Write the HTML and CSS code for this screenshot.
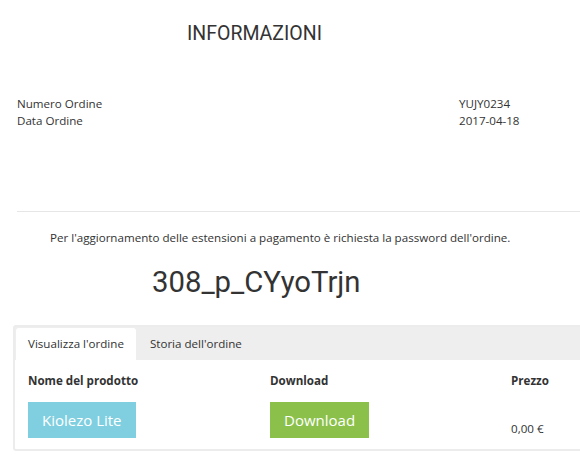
FILE: index.html
```html
<!DOCTYPE html>
<html lang="it">
    <head>
        <meta charset="utf-8">
        <title>Informazioni ordine</title>
        <link rel="stylesheet" href="styles.css">
    </head>
    <body>
        <div class="page">
            <h1 class="title">INFORMAZIONI</h1>
            <div class="info"> <!-- order data -->
                <span>Numero Ordine</span><span>YUJY0234</span>
                <span>Data Ordine</span><span>2017-04-18</span>
            </div>
            <hr class="sep">
            <p class="notice">Per l'aggiornamento delle estensioni a pagamento è richiesta la password dell'ordine.</p>
            <div class="password">308_p_CYyoTrjn</div>
            <div class="panel">
                <div class="tabs">
                    <div class="tab active">Visualizza l'ordine</div>
                    <div class="tab">Storia dell'ordine</div>
                </div>
                <div class="table">
                    <div class="th">Nome del prodotto</div>
                    <div class="th">Download</div>
                    <div class="th">Prezzo</div>
                    <div class="td"><span class="btn btn-product">Kiolezo Lite</span></div>
                    <div class="td"><span class="btn btn-download">Download</span></div>
                    <div class="td price">0,00 €</div>
                </div>
            </div>
        </div>
    </body>
</html>
```

FILE: styles.css
```css
*{
    margin: 0;
    padding: 0;
    box-sizing: border-box;
}
body{
    width: 580px;
    overflow: hidden;
    font-family: "Open Sans", sans-serif;
    font-size: 11.6px;
    color: #333;
    background: #fff;
}
.page{
    padding-left: 17px;
}
.title{
    font-family: Roboto, sans-serif;
    font-weight: 400;
    font-size: 19.5px;
    line-height: 24px;
    padding: 22px 0 0 170px;
    color: #333;
}
.info{
    display: grid;
    grid-template-columns: 442px auto;
    line-height: 17px;
    margin-top: 49px;
}
.sep{
    border: 0;
    border-top: 1px solid #e6e6e6;
    margin-top: 82px;
}
.notice{
    padding-left: 33px;
    margin-top: 17px;
    line-height: 18px;
}
.password{
    font-family: Roboto, sans-serif;
    font-size: 29.3px;
    line-height: 36px;
    padding-left: 135px;
    margin-top: 17px;
    color: #333;
}
.panel{
    width: 760px;
    margin: 25px 0 0 -4px;
    border: 2px solid #ececec;
    border-radius: 3px;
}
.tabs{
    display: flex;
    background: #eee;
    padding: 1px 0 0 1px;
}
.tab{
    padding: 0 12px;
    line-height: 32px;
}
.tab.active{
    background: #fff;
    border-radius: 3px 3px 0 0;
}
.tab + .tab{
    padding-left: 14px;
}
.table{
    display: grid;
    grid-template-columns: 242px 241px 1fr;
    padding: 12px 0 11px 13px;
}
.th{
    font-weight: 700;
    line-height: 18px;
}
.td{
    margin-top: 12px;
}
.btn{
    display: inline-block;
    color: #fff;
    font-size: 15px;
    line-height: 36px;
    padding: 0 14px;
}
.btn-product{
    background: #80cfe0;
    width: 108px;
}
.btn-download{
    background: #8bc14a;
    width: 99px;
}
.price{
    align-self: end;
    line-height: 18px;
}
```
